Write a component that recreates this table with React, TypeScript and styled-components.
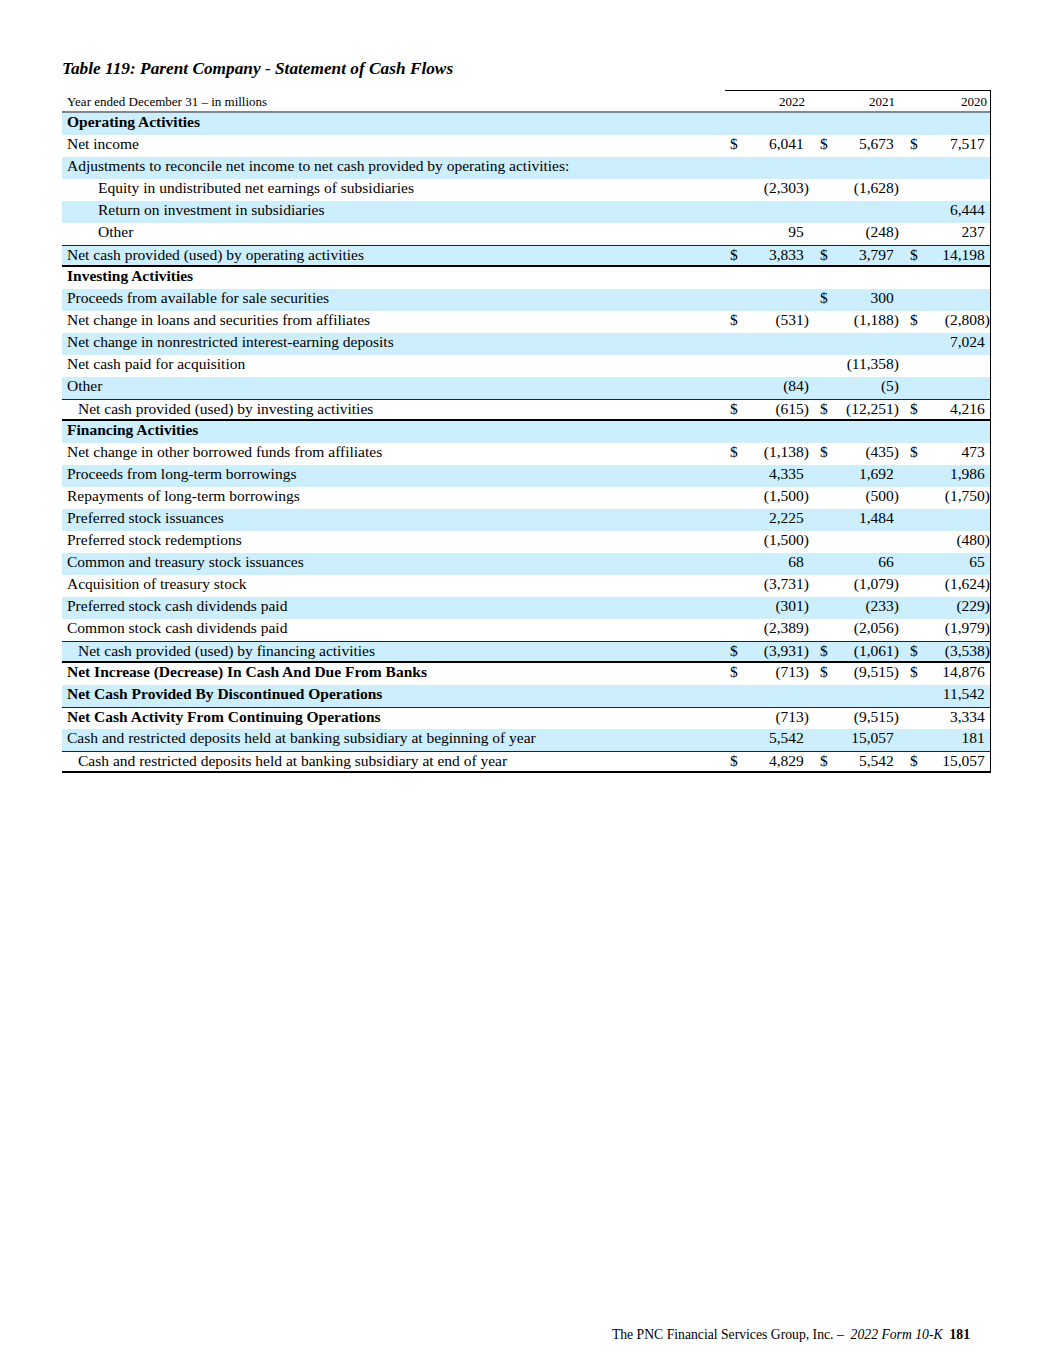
import React from "react";
import styled, { createGlobalStyle, css } from "styled-components";

const GlobalStyle = createGlobalStyle`
  html, body { margin: 0; padding: 0; background: #fff; }
  body { font-family: "Liberation Serif", "Times New Roman", serif; color: #000; }
`;

const BLUE = "#cdeefd";

type Cell = { d?: boolean; v?: string } | null;
type RowData = {
  label: string;
  bold?: boolean;
  bg?: boolean;
  indent?: 0 | 1 | 2;
  top?: boolean;
  bottom?: boolean;
  vals?: [Cell, Cell, Cell];
};

const c = (v: string, d = false): Cell => ({ v, d });
const E: Cell = null;

const rows: RowData[] = [
  { label: "Operating Activities", bold: true, bg: true },
  { label: "Net income", vals: [c("6,041", true), c("5,673", true), c("7,517", true)] },
  { label: "Adjustments to reconcile net income to net cash provided by operating activities:", bg: true },
  { label: "Equity in undistributed net earnings of subsidiaries", indent: 2, vals: [c("(2,303)"), c("(1,628)"), E] },
  { label: "Return on investment in subsidiaries", indent: 2, bg: true, vals: [E, E, c("6,444")] },
  { label: "Other", indent: 2, vals: [c("95"), c("(248)"), c("237")] },
  { label: "Net cash provided (used) by operating activities", bg: true, top: true, bottom: true, vals: [c("3,833", true), c("3,797", true), c("14,198", true)] },
  { label: "Investing Activities", bold: true },
  { label: "Proceeds from available for sale securities", bg: true, vals: [E, c("300", true), E] },
  { label: "Net change in loans and securities from affiliates", vals: [c("(531)", true), c("(1,188)"), c("(2,808)", true)] },
  { label: "Net change in nonrestricted interest-earning deposits", bg: true, vals: [E, E, c("7,024")] },
  { label: "Net cash paid for acquisition", vals: [E, c("(11,358)"), E] },
  { label: "Other", bg: true, vals: [c("(84)"), c("(5)"), E] },
  { label: "Net cash provided (used) by investing activities", indent: 1, top: true, bottom: true, vals: [c("(615)", true), c("(12,251)", true), c("4,216", true)] },
  { label: "Financing Activities", bold: true, bg: true },
  { label: "Net change in other borrowed funds from affiliates", vals: [c("(1,138)", true), c("(435)", true), c("473", true)] },
  { label: "Proceeds from long-term borrowings", bg: true, vals: [c("4,335"), c("1,692"), c("1,986")] },
  { label: "Repayments of long-term borrowings", vals: [c("(1,500)"), c("(500)"), c("(1,750)")] },
  { label: "Preferred stock issuances", bg: true, vals: [c("2,225"), c("1,484"), E] },
  { label: "Preferred stock redemptions", vals: [c("(1,500)"), E, c("(480)")] },
  { label: "Common and treasury stock issuances", bg: true, vals: [c("68"), c("66"), c("65")] },
  { label: "Acquisition of treasury stock", vals: [c("(3,731)"), c("(1,079)"), c("(1,624)")] },
  { label: "Preferred stock cash dividends paid", bg: true, vals: [c("(301)"), c("(233)"), c("(229)")] },
  { label: "Common stock cash dividends paid", vals: [c("(2,389)"), c("(2,056)"), c("(1,979)")] },
  { label: "Net cash provided (used) by financing activities", indent: 1, bg: true, top: true, bottom: true, vals: [c("(3,931)", true), c("(1,061)", true), c("(3,538)", true)] },
  { label: "Net Increase (Decrease) In Cash And Due From Banks", bold: true, vals: [c("(713)", true), c("(9,515)", true), c("14,876", true)] },
  { label: "Net Cash Provided By Discontinued Operations", bold: true, bg: true, vals: [E, E, c("11,542")] },
  { label: "Net Cash Activity From Continuing Operations", bold: true, top: true, vals: [c("(713)"), c("(9,515)"), c("3,334")] },
  { label: "Cash and restricted deposits held at banking subsidiary at beginning of year", bg: true, vals: [c("5,542"), c("15,057"), c("181")] },
  { label: "Cash and restricted deposits held at banking subsidiary at end of year", indent: 1, top: true, bottom: true, vals: [c("4,829", true), c("5,542", true), c("15,057", true)] },
];

const Page = styled.div`
  min-height: 1365px;
  box-sizing: border-box;
  display: flex;
  flex-direction: column;
  padding: 59px 0 22px 62px;
`;

const Title = styled.h1`
  margin: 0 0 11px 0;
  font-size: 17.3px;
  line-height: 20px;
  font-weight: bold;
  font-style: italic;
`;

const Table = styled.div`
  width: 929px;
  box-sizing: border-box;
  border-right: 1px solid #000;
  display: flex;
  flex-direction: column;
`;

const GRID = "663px 90px 90px 85px";

const HeaderRow = styled.div`
  display: grid;
  grid-template-columns: ${GRID};
  height: 23px;
  box-sizing: border-box;
  border-bottom: 2px solid #7f8890;
  font-size: 13px;
  line-height: 15px;
`;

const HeaderLabel = styled.div`
  padding: 0 0 2px 5px;
  display: flex;
  align-items: flex-end;
  white-space: nowrap;
`;

const HeaderYear = styled.div<{ $last?: boolean }>`
  border-top: 1px solid #000;
  display: flex;
  align-items: flex-end;
  justify-content: flex-end;
  padding: 0 ${(p) => (p.$last ? "3px" : "10px")} 2px 0;
`;

const Row = styled.div<{ $bg?: boolean; $top?: boolean; $bottom?: boolean }>`
  display: grid;
  grid-template-columns: ${GRID};
  height: 22px;
  box-sizing: border-box;
  background: ${(p) => (p.$bg ? BLUE : "#fff")};
  font-size: 15.5px;
  line-height: 18px;
  align-items: start;
  ${(p) =>
    p.$top &&
    css`
      border-top: 1px solid #222;
      line-height: 17px;
    `}
  ${(p) =>
    p.$bottom &&
    css`
      border-bottom: 2px solid #000;
    `}
`;

const Label = styled.div<{ $bold?: boolean; $indent: number }>`
  padding-left: ${(p) => 5 + (p.$indent === 2 ? 31 : p.$indent === 1 ? 11 : 0)}px;
  font-weight: ${(p) => (p.$bold ? "bold" : "normal")};
  white-space: nowrap;
`;

const Value = styled.div<{ $last?: boolean }>`
  display: flex;
  justify-content: space-between;
  padding: 0 ${(p) => (p.$last ? "0" : "6px")} 0 5px;
  white-space: nowrap;
`;

const Num = styled.span`
  margin-left: auto;
`;

const Ghost = styled.span`
  visibility: hidden;
`;

const Footer = styled.div`
  margin-top: auto;
  align-self: flex-end;
  padding-right: 85px;
  font-size: 13.7px;
  line-height: 16px;
  white-space: pre;
`;

const Italic = styled.span`
  font-style: italic;
`;

const Bold = styled.span`
  font-weight: bold;
`;

function ValueCell({ cell, last }: { cell: Cell; last?: boolean }) {
  if (!cell) return <Value $last={last} />;
  const neg = cell.v!.endsWith(")");
  return (
    <Value $last={last}>
      {cell.d && <span>$</span>}
      <Num>
        {cell.v}
        {!neg && <Ghost>)</Ghost>}
      </Num>
    </Value>
  );
}

export default function App() {
  return (
    <>
      <GlobalStyle />
      <Page>
        <Title>Table 119: Parent Company - Statement of Cash Flows</Title>
        <Table>
          <HeaderRow>
            <HeaderLabel>Year ended December 31 – in millions</HeaderLabel>
            <HeaderYear>2022</HeaderYear>
            <HeaderYear>2021</HeaderYear>
            <HeaderYear $last>2020</HeaderYear>
          </HeaderRow>
          {rows.map((r, i) => (
            <Row key={i} $bg={r.bg} $top={r.top} $bottom={r.bottom}>
              <Label $bold={r.bold} $indent={r.indent ?? 0}>
                {r.label}
              </Label>
              <ValueCell cell={r.vals ? r.vals[0] : null} />
              <ValueCell cell={r.vals ? r.vals[1] : null} />
              <ValueCell cell={r.vals ? r.vals[2] : null} last />
            </Row>
          ))}
        </Table>
        <Footer>
          {"The PNC Financial Services Group, Inc. –  "}
          <Italic>2022 Form 10-K</Italic>
          {"  "}
          <Bold>181</Bold>
        </Footer>
      </Page>
    </>
  );
}
